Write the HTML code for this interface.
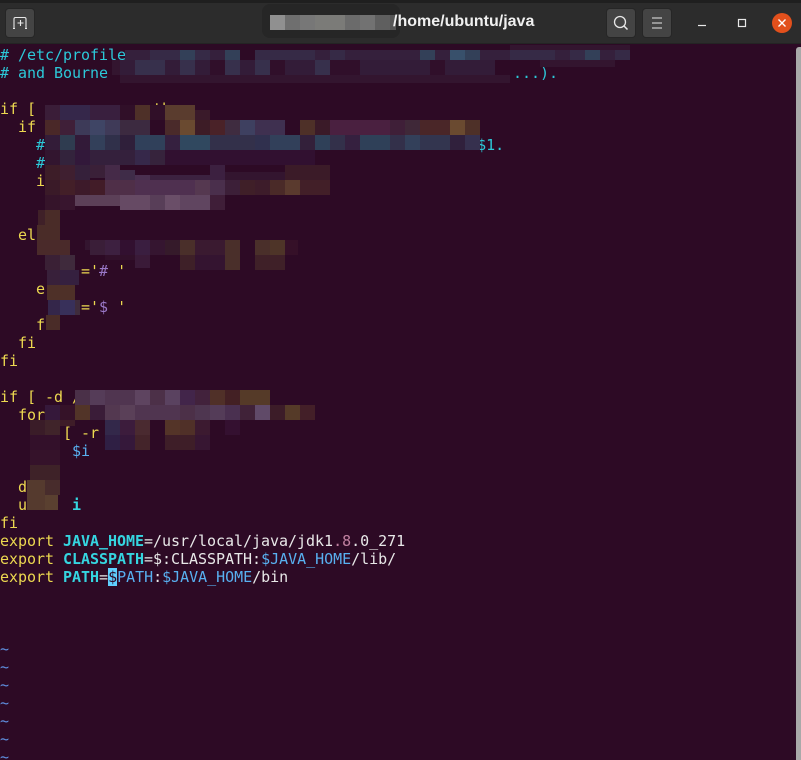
<!DOCTYPE html>
<html><head><meta charset="utf-8"><style>
html,body{margin:0;padding:0;width:801px;height:760px;overflow:hidden;background:#2d0a25}
#t{position:absolute;left:0;top:0;width:801px;height:760px;background:#2d0a25;overflow:hidden}
pre{position:absolute;left:0;top:46px;margin:0;font:15px/18px "DejaVu Sans Mono","Liberation Mono",monospace;letter-spacing:-.03px;color:#e8e8e8}
.y{color:#ecd850}.c{color:#2cc8d8}.b{color:#35d5e0;font-weight:bold}.l{color:#58b0f0}.m{color:#9a78c8}.u{color:#5f8fe0}.p{color:#c080a0}
.k{background:#5fd0ff;color:#2d0a25}
svg{position:absolute;left:0;top:0}
#h{position:absolute;left:0;top:0;width:801px;height:44px;background:#2c2c2c;border-bottom:0}
#h i{position:absolute;display:block}
.btn{width:28px;height:28px;background:#444;border-radius:3px;top:9px;box-shadow:0 0 0 1px #262626}
#title{position:absolute;left:393px;top:12px;font:bold 16px/20px "Liberation Sans",sans-serif;color:#f0f0f0;white-space:pre}
#sb{position:absolute;left:796px;top:47px;width:5px;height:713px;background:#a9a9a9;border-radius:3px 0 0 0}
</style></head><body>
<div id="t">
<pre><span class="c"># /etc/profile
# and Bourne                                             ...).</span>

<span class="y">if [             then</span>
<span class="y">  if</span>
    <span class="c">#</span>          <span class="c">bas</span>                                   <span class="c">$1.</span>
    <span class="c">#    =</span>
    <span class="y">i</span>


<span class="y">  el</span>

         <span class="y">='</span><span class="m">#</span> <span class="y">'</span>
    <span class="y">e</span>
         <span class="y">='</span><span class="m">$</span> <span class="y">'</span>
    <span class="y">f</span>
<span class="y">  fi
fi</span>

<span class="y">if [ -d /</span>
<span class="y">  for</span>
       <span class="y">[ -r</span>
        <span class="l">$i</span>

<span class="y">  d</span>
<span class="y">  u</span>     <span class="b">i</span>
<span class="y">fi
export</span> <span class="b">JAVA_HOME</span>=/usr/local/java/jdk1<span class="p">.8</span>.0_271
<span class="y">export</span> <span class="b">CLASSPATH</span>=$:CLASSPATH:<span class="l">$JAVA_HOME</span>/lib/
<span class="y">export</span> <span class="b">PATH</span>=<span class="k">$</span><span class="l">PATH</span>:<span class="l">$JAVA_HOME</span>/bin



<span class="u">~
~
~
~
~
~
~</span></pre>
<svg width="801" height="760" xmlns="http://www.w3.org/2000/svg" shape-rendering="crispEdges">
<g fill="#33152f"><rect x="120" y="75" width="390" height="8"/><rect x="112" y="60" width="10" height="15"/><rect x="510" y="45" width="120" height="5"/><rect x="540" y="60" width="75" height="7"/></g>
<g fill="#35203c"><rect x="125" y="50" width="385" height="10"/><rect x="510" y="50" width="120" height="10"/></g>
<g fill="#362a46"><rect x="150" y="50" width="30" height="10"/><rect x="195" y="50" width="15" height="10"/><rect x="255" y="50" width="60" height="10"/><rect x="330" y="50" width="15" height="10"/><rect x="510" y="50" width="45" height="10"/><rect x="570" y="50" width="15" height="10"/><rect x="615" y="50" width="15" height="10"/></g>
<g fill="#334058"><rect x="180" y="50" width="15" height="10"/><rect x="225" y="50" width="15" height="10"/><rect x="420" y="50" width="15" height="10"/><rect x="465" y="50" width="15" height="10"/><rect x="585" y="50" width="15" height="10"/></g>
<rect x="450" y="50" width="15" height="10" fill="#38506b"/><rect x="240" y="50" width="15" height="10" fill="#2d0a25"/>
<g fill="#37304c"><rect x="135" y="60" width="30" height="15"/><rect x="180" y="60" width="15" height="15"/><rect x="225" y="60" width="15" height="15"/><rect x="255" y="60" width="15" height="15"/><rect x="315" y="60" width="15" height="15"/><rect x="450" y="60" width="15" height="15"/></g>
<g fill="#331c38"><rect x="120" y="60" width="15" height="15"/><rect x="165" y="60" width="15" height="15"/><rect x="195" y="60" width="15" height="15"/><rect x="240" y="60" width="15" height="15"/><rect x="285" y="60" width="30" height="15"/><rect x="360" y="60" width="135" height="15"/></g>
<g fill="#300f2a"><rect x="210" y="60" width="15" height="15"/><rect x="270" y="60" width="15" height="15"/><rect x="330" y="60" width="30" height="15"/><rect x="430" y="60" width="15" height="15"/></g>

<!-- 105 -->
<rect x="45" y="105" width="15" height="15" fill="#3a1d38"/><rect x="60" y="105" width="30" height="15" fill="#35274a"/><rect x="90" y="105" width="30" height="15" fill="#391f3e"/><rect x="120" y="105" width="15" height="15" fill="#300f28"/><rect x="135" y="105" width="15" height="15" fill="#4e3028"/><rect x="150" y="105" width="15" height="15" fill="#300f28"/><rect x="165" y="105" width="30" height="15" fill="#5a3c2e"/><rect x="195" y="110" width="15" height="10" fill="#3a1a2a"/>
<!-- 120 -->
<rect x="45" y="120" width="15" height="15" fill="#4a2828"/><rect x="60" y="120" width="15" height="15" fill="#3f1f38"/><rect x="75" y="120" width="15" height="15" fill="#3d3a58"/><rect x="90" y="120" width="15" height="15" fill="#3f4565"/><rect x="105" y="120" width="15" height="15" fill="#3f3a58"/><rect x="120" y="120" width="30" height="15" fill="#3c2a40"/><rect x="165" y="120" width="15" height="15" fill="#4a2a2a"/><rect x="180" y="120" width="15" height="15" fill="#6a4a30"/><rect x="195" y="120" width="15" height="15" fill="#3d1c26"/><rect x="210" y="120" width="15" height="15" fill="#4a2228"/><rect x="225" y="120" width="15" height="15" fill="#3f2c40"/><rect x="240" y="120" width="15" height="15" fill="#3e4060"/><rect x="255" y="120" width="30" height="15" fill="#3f3050"/><rect x="300" y="120" width="15" height="15" fill="#4e3028"/><rect x="315" y="120" width="15" height="15" fill="#3a1a28"/><rect x="330" y="120" width="60" height="15" fill="#4a2040"/><rect x="390" y="120" width="15" height="15" fill="#3f1f38"/><rect x="405" y="120" width="15" height="15" fill="#3f2838"/><rect x="420" y="120" width="45" height="15" fill="#4a2628"/><rect x="450" y="120" width="15" height="15" fill="#6a4a30"/><rect x="465" y="120" width="15" height="15" fill="#4e3028"/>
<!-- 135 -->
<rect x="45" y="135" width="15" height="15" fill="#331c38"/><rect x="60" y="135" width="15" height="15" fill="#2f3c50"/><rect x="75" y="135" width="15" height="15" fill="#321a38"/><rect x="90" y="135" width="15" height="15" fill="#33405a"/><rect x="105" y="135" width="15" height="15" fill="#30304a"/><rect x="120" y="135" width="15" height="15" fill="#2f1f3a"/><rect x="135" y="135" width="30" height="15" fill="#30405a"/><rect x="165" y="135" width="15" height="15" fill="#35203f"/><rect x="180" y="135" width="30" height="15" fill="#30485f"/><rect x="210" y="135" width="45" height="15" fill="#33304a"/><rect x="255" y="135" width="15" height="15" fill="#30304e"/><rect x="270" y="135" width="30" height="15" fill="#32405a"/><rect x="300" y="135" width="15" height="15" fill="#33203a"/><rect x="315" y="135" width="15" height="15" fill="#2f4058"/><rect x="330" y="135" width="15" height="15" fill="#33304a"/><rect x="345" y="135" width="15" height="15" fill="#35203f"/><rect x="360" y="135" width="30" height="15" fill="#2f4058"/><rect x="390" y="135" width="15" height="15" fill="#33304a"/><rect x="405" y="135" width="15" height="15" fill="#33405a"/><rect x="420" y="135" width="30" height="15" fill="#33354f"/><rect x="450" y="135" width="15" height="15" fill="#30203c"/><rect x="465" y="135" width="15" height="15" fill="#36304e"/>
<!-- 150 -->
<rect x="45" y="150" width="15" height="15" fill="#32152f"/><rect x="60" y="150" width="15" height="15" fill="#33233c"/><rect x="75" y="150" width="15" height="15" fill="#32183a"/><rect x="90" y="150" width="45" height="15" fill="#34203c"/><rect x="135" y="150" width="15" height="15" fill="#36284a"/><rect x="150" y="150" width="15" height="15" fill="#36233c"/><rect x="165" y="150" width="150" height="15" fill="#311030"/>
<!-- 165 -->
<rect x="45" y="165" width="15" height="15" fill="#3d1d28"/><rect x="60" y="165" width="15" height="15" fill="#3f1f30"/><rect x="75" y="165" width="15" height="15" fill="#35203a"/><rect x="90" y="165" width="15" height="13" fill="#3a2038"/><rect x="105" y="165" width="15" height="15" fill="#452a48"/><rect x="120" y="170" width="15" height="10" fill="#3f2c48"/><rect x="135" y="175" width="15" height="5" fill="#4a3050"/><rect x="150" y="175" width="60" height="5" fill="#3c2240"/><rect x="210" y="165" width="15" height="15" fill="#3c2040"/><rect x="225" y="172" width="60" height="8" fill="#33152f"/><rect x="285" y="165" width="45" height="15" fill="#3b1b28"/>
<!-- 180 -->
<rect x="45" y="180" width="15" height="15" fill="#3a1a28"/><rect x="60" y="180" width="15" height="15" fill="#431f28"/><rect x="75" y="180" width="15" height="15" fill="#3d1a2a"/><rect x="90" y="180" width="15" height="15" fill="#421c28"/><rect x="105" y="180" width="30" height="15" fill="#4f2f48"/><rect x="135" y="180" width="60" height="15" fill="#4f3050"/><rect x="195" y="180" width="15" height="15" fill="#553850"/><rect x="210" y="180" width="15" height="15" fill="#4a2f4c"/><rect x="225" y="180" width="15" height="15" fill="#3c1f38"/><rect x="240" y="180" width="15" height="15" fill="#3f1f28"/><rect x="255" y="180" width="15" height="15" fill="#3d1c2a"/><rect x="270" y="180" width="15" height="15" fill="#4a2a28"/><rect x="285" y="180" width="15" height="15" fill="#5a3a2e"/><rect x="300" y="180" width="30" height="15" fill="#421f28"/>
<!-- 195 -->
<rect x="45" y="195" width="15" height="15" fill="#35142a"/><rect x="60" y="195" width="15" height="15" fill="#38152e"/><rect x="75" y="195" width="45" height="11" fill="#5c4058"/><rect x="120" y="195" width="30" height="15" fill="#664a64"/><rect x="150" y="195" width="15" height="15" fill="#583e58"/><rect x="165" y="195" width="15" height="15" fill="#6a4e68"/><rect x="180" y="195" width="30" height="15" fill="#604560"/><rect x="210" y="195" width="15" height="15" fill="#3f1e38"/>
<!-- left column -->
<rect x="45" y="210" width="15" height="15" fill="#4a2c28"/><rect x="38" y="210" width="7" height="15" fill="#3f2028"/><rect x="37" y="225" width="23" height="15" fill="#4a2c28"/><rect x="37" y="240" width="33" height="15" fill="#4a2a2a"/><rect x="45" y="255" width="15" height="15" fill="#3a2035"/><rect x="60" y="255" width="15" height="15" fill="#3f2a3c"/><rect x="47" y="270" width="13" height="15" fill="#38203a"/><rect x="60" y="270" width="19" height="15" fill="#35203f"/><rect x="47" y="285" width="28" height="15" fill="#4e3028"/><rect x="48" y="300" width="12" height="15" fill="#34264a"/><rect x="60" y="300" width="15" height="15" fill="#38305a"/><rect x="75" y="300" width="5" height="15" fill="#3f2c3c"/><rect x="46" y="315" width="14" height="15" fill="#4a2c28"/>
<!-- 240 -->
<rect x="85" y="240" width="5" height="10" fill="#33152f"/><rect x="90" y="240" width="15" height="15" fill="#3a1e38"/><rect x="105" y="240" width="15" height="15" fill="#3d2040"/><rect x="120" y="240" width="15" height="15" fill="#321030"/><rect x="135" y="240" width="15" height="15" fill="#3a1e40"/><rect x="150" y="240" width="15" height="15" fill="#351530"/><rect x="165" y="240" width="15" height="15" fill="#351a2a"/><rect x="180" y="240" width="15" height="15" fill="#4a2f2a"/><rect x="195" y="240" width="30" height="15" fill="#3a1a30"/><rect x="225" y="240" width="15" height="15" fill="#4a2f2a"/><rect x="255" y="240" width="15" height="15" fill="#4a2f2a"/><rect x="270" y="240" width="15" height="15" fill="#4e3428"/><rect x="285" y="240" width="13" height="15" fill="#351028"/>
<rect x="105" y="255" width="30" height="5" fill="#31102a"/><rect x="135" y="255" width="15" height="13" fill="#3a1a38"/><rect x="180" y="255" width="15" height="15" fill="#3e2028"/><rect x="195" y="255" width="30" height="15" fill="#341430"/><rect x="225" y="255" width="15" height="15" fill="#4a2f2a"/><rect x="255" y="255" width="30" height="15" fill="#3f2028"/>

<!-- lower mosaic -->
<rect x="75" y="390" width="15" height="15" fill="#4a3048"/><rect x="90" y="390" width="15" height="15" fill="#553c58"/><rect x="105" y="390" width="30" height="15" fill="#503550"/><rect x="135" y="390" width="15" height="15" fill="#5e4460"/><rect x="150" y="390" width="15" height="15" fill="#4c3048"/><rect x="165" y="390" width="15" height="15" fill="#5a4260"/><rect x="180" y="390" width="15" height="15" fill="#42254a"/><rect x="195" y="390" width="15" height="15" fill="#42223c"/><rect x="210" y="390" width="15" height="15" fill="#503028"/><rect x="225" y="390" width="15" height="15" fill="#432024"/><rect x="240" y="390" width="30" height="15" fill="#553a28"/>
<rect x="45" y="405" width="15" height="15" fill="#35183a"/><rect x="60" y="405" width="15" height="15" fill="#351228"/><rect x="75" y="405" width="15" height="15" fill="#523428"/><rect x="90" y="405" width="15" height="15" fill="#3a1c38"/><rect x="105" y="405" width="15" height="15" fill="#533850"/><rect x="120" y="405" width="15" height="15" fill="#5a4058"/><rect x="135" y="405" width="45" height="15" fill="#503550"/><rect x="180" y="405" width="15" height="15" fill="#4c3048"/><rect x="195" y="405" width="15" height="15" fill="#4e3650"/><rect x="210" y="405" width="15" height="15" fill="#543c58"/><rect x="225" y="405" width="15" height="15" fill="#4a3050"/><rect x="240" y="405" width="15" height="15" fill="#402238"/><rect x="255" y="405" width="15" height="15" fill="#604a68"/><rect x="270" y="405" width="15" height="15" fill="#3c1c28"/><rect x="285" y="405" width="15" height="15" fill="#553a28"/><rect x="300" y="405" width="15" height="15" fill="#431f28"/>
<rect x="30" y="420" width="15" height="15" fill="#3a1c28"/><rect x="45" y="420" width="15" height="15" fill="#40242a"/><rect x="60" y="420" width="15" height="6" fill="#3e1c28"/><rect x="105" y="420" width="15" height="15" fill="#33284a"/><rect x="120" y="420" width="15" height="15" fill="#3c1c3c"/><rect x="135" y="420" width="15" height="15" fill="#4a2a30"/><rect x="165" y="420" width="15" height="15" fill="#543428"/><rect x="180" y="420" width="15" height="15" fill="#503028"/><rect x="195" y="420" width="15" height="15" fill="#3c1a30"/><rect x="225" y="420" width="15" height="15" fill="#341030"/>
<rect x="30" y="435" width="30" height="15" fill="#33102a"/><rect x="105" y="435" width="15" height="15" fill="#2f1f44"/><rect x="120" y="435" width="15" height="15" fill="#35183a"/><rect x="135" y="435" width="15" height="15" fill="#44242a"/><rect x="165" y="435" width="30" height="15" fill="#3e1e28"/><rect x="195" y="435" width="15" height="15" fill="#371632"/>
<rect x="30" y="450" width="30" height="15" fill="#35122a"/><rect x="30" y="465" width="30" height="15" fill="#3e2228"/>
<rect x="27" y="480" width="18" height="15" fill="#553a2e"/><rect x="45" y="480" width="15" height="15" fill="#482c2c"/><rect x="27" y="495" width="18" height="15" fill="#553a2e"/><rect x="45" y="495" width="13" height="15" fill="#5a4030"/>
</svg>
<div id="sb"></div>
<div id="h">
<i style="left:0;top:0;width:801px;height:3px;background:#1f1f1f"></i>
<i style="left:0;top:43px;width:801px;height:1px;background:#242424"></i>
<i style="left:262px;top:4px;width:138px;height:34px;background:#262626;border-radius:8px"></i>
<svg width="801" height="44" xmlns="http://www.w3.org/2000/svg" shape-rendering="crispEdges" style="left:0;top:0">
<rect x="270" y="15" width="15" height="15" fill="#909090"/><rect x="285" y="15" width="15" height="15" fill="#6f6f6f"/><rect x="300" y="15" width="15" height="15" fill="#777"/><rect x="315" y="15" width="30" height="15" fill="#7b7b78"/><rect x="345" y="15" width="15" height="15" fill="#6b6b6b"/><rect x="360" y="15" width="15" height="15" fill="#727272"/><rect x="375" y="15" width="15" height="15" fill="#5f5f5f"/><rect x="390" y="15" width="6" height="15" fill="#555"/>
</svg>
<i class="btn" style="left:6px"></i><i class="btn" style="left:607px"></i><i class="btn" style="left:643px"></i>
<div id="title">/home/ubuntu/java</div>
<svg width="801" height="44" xmlns="http://www.w3.org/2000/svg" style="left:0;top:0" fill="none" stroke="#e8e8e8">
<path d="M14 28.5v-9.5a1.5 1.5 0 0 1 1.500-1.500h9a1.500 1.500 0 0 1 1.500 1.500v9.500M13 28.500h2M25 28.500h2M20.500 20v6M17.500 23h6" stroke-width="1.100"/>
<circle cx="620" cy="22" r="5.500" stroke-width="1.300"/><path d="M624 26l3.500 3.500" stroke-width="1.500"/>
<path d="M652 18h10M652 23h10M652 28h10" stroke-width="1.100"/>
<path d="M698 25.500h8" stroke-width="1.200"/>
<rect x="738.500" y="19.500" width="7" height="7" stroke-width="1.200"/>
<circle cx="782" cy="23" r="10" fill="#e2501c" stroke="none"/>
<path d="M778.500 19.500l7 7M785.500 19.500l-7 7" stroke-width="1.400" stroke="#fff"/>
</svg>
</div>
</div>
</body></html>
